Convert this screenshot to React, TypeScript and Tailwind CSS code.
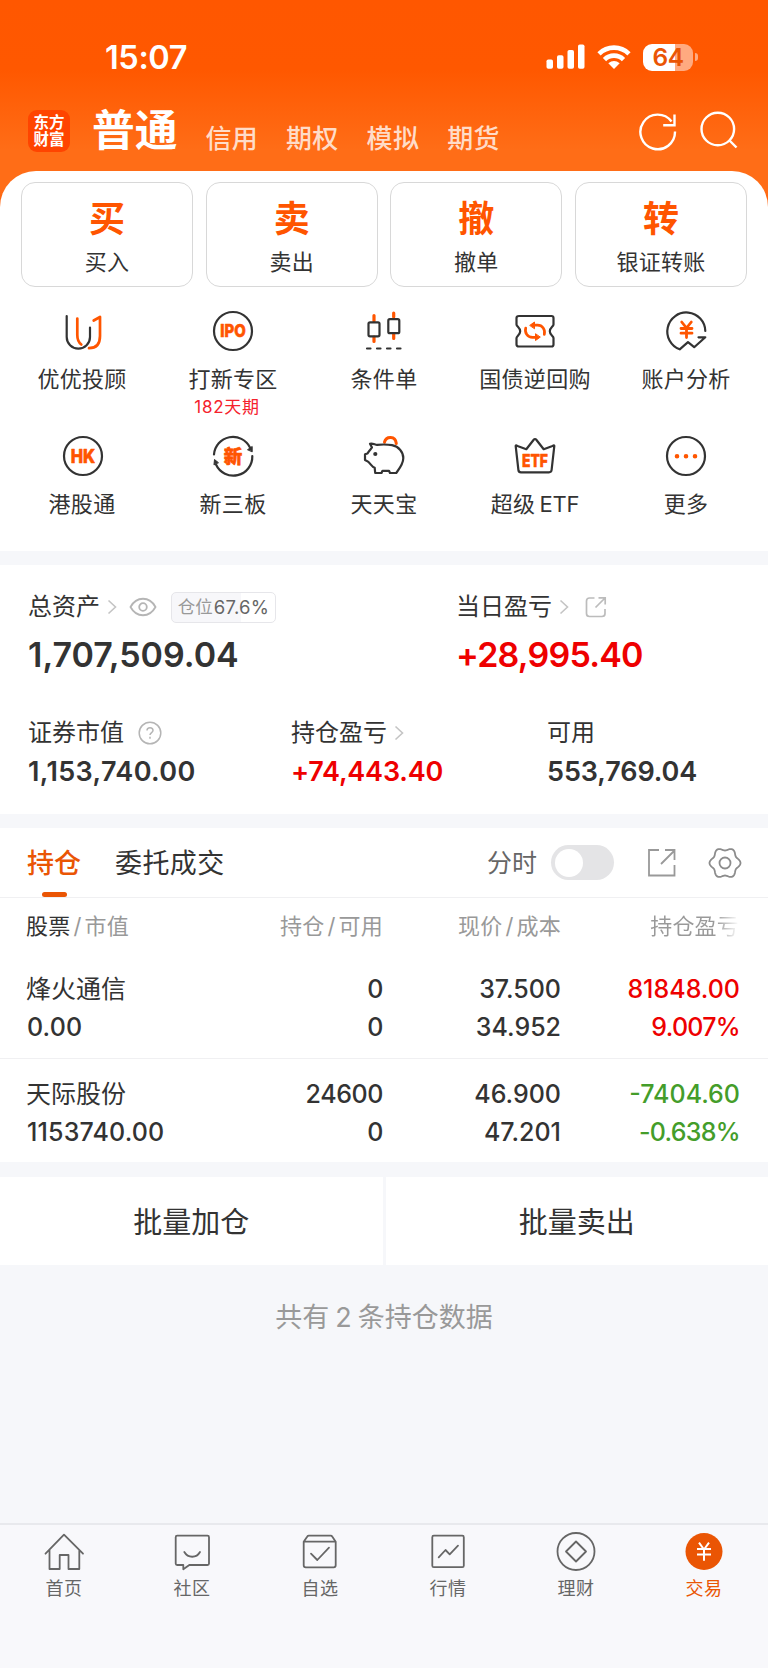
import React from 'react';

interface IconProps {
  children: React.ReactNode;
  size?: number;
  className?: string;
}

// Every glyph is drawn around its own centre point
const Glyph: React.FC<IconProps> = ({ children, size = 44, className = '' }) => (
  <svg
    width={size}
    height={size}
    viewBox={`${-size / 2} ${-size / 2} ${size} ${size}`}
    fill="none"
    strokeLinecap="round"
    strokeLinejoin="round"
    className={`shrink-0 ${className}`}
  >
    {children}
  </svg>
);

const DARK = '#333333';
const ORANGE = '#ff5500';

const glyphText = {
  fill: ORANGE,
  stroke: ORANGE,
  strokeWidth: 0.6,
  textAnchor: 'middle' as const,
  fontFamily: 'Inter, "Noto Sans CJK SC", sans-serif',
  fontWeight: 800,
};

const AdvisorIcon = () => (
  <Glyph>
    <path d="M-15.3 -15V6a11.6 11.6 0 0 0 23.3 0V-3.5" stroke={DARK} strokeWidth="2.2" />
    <path d="M-4.7 -12.5V4q0 6.5 4 9.5" stroke={ORANGE} strokeWidth="2.7" />
    <path d="M11.7 -10.5L18 -14V5C18 13 14 17.2 7 17.2" stroke={ORANGE} strokeWidth="2.7" />
  </Glyph>
);

const IpoIcon = () => (
  <Glyph>
    <circle r="19" stroke={DARK} strokeWidth="2.2" />
    <text {...glyphText} y="6.3" fontSize="17.5" textLength="25.5" lengthAdjust="spacingAndGlyphs">IPO</text>
  </Glyph>
);

const CandleIcon = () => (
  <Glyph>
    <path d="M-10 -15.5V-10M-10 6V10.5M9.7 -18V-14M9.7 3V7.5" stroke={ORANGE} strokeWidth="3.2" />
    <rect x="-15.5" y="-8.7" width="11" height="14" rx="1.5" stroke={DARK} strokeWidth="2.2" />
    <rect x="4.3" y="-11.8" width="11" height="14" rx="1.5" stroke={DARK} strokeWidth="2.2" />
    <path d="M-17 17.5h3.5M-7 17.5h3.5M3 17.5h3.5M13 17.5h3.5" stroke={DARK} strokeWidth="2.2" />
  </Glyph>
);

const BondIcon = () => (
  <Glyph>
    <path
      d="M-16 -15H16.5Q18.500 -15 18.5 -13V-6.5C18.5 -4.5 14.8 -3.5 14.8 0.3S18.5 5 18.5 7V13.5Q18.5 15.5 16.5 15.5H-16Q-18.5 15.5 -18.5 13.5V7C-18.5 5 -14.8 4 -14.8 0.3S-18.5 -4.5 -18.5 -6.5V-13Q-18.5 -15 -16 -15Z"
      stroke={DARK}
      strokeWidth="2.2"
    />
    <path d="M-2 -5.8H2.5C7.5 -5.8 10.5 -1.5 9.3 3.5M2 6.3H-2.5C-7.5 6.3 -10.5 2 -9.3 -3" stroke={ORANGE} strokeWidth="2.7" />
    <path d="M-5 -5.8L-0.5 -9V-2.6ZM5 6.3L0.5 9.5V3.1Z" fill={ORANGE} stroke={ORANGE} strokeWidth="1" />
  </Glyph>
);

const AnalysisIcon = () => (
  <Glyph>
    <path d="M19.3 0A19 19 0 1 0 -6.3 18.3L2 11.2L8.2 16.2L19.3 6.3H12.5" stroke={DARK} strokeWidth="2.2" />
    <path d="M-4.3 -9L0.5 -3L5.3 -9M0.5 -3V6.5M-5 -2.5H6M-5 2.2H6" stroke={ORANGE} strokeWidth="2.8" />
  </Glyph>
);

const HkIcon = () => (
  <Glyph className="ml-[1px]">
    <circle r="19" stroke={DARK} strokeWidth="2.2" />
    <text {...glyphText} y="7" fontSize="18.5" textLength="24.5" lengthAdjust="spacingAndGlyphs">HK</text>
  </Glyph>
);

const NeeqIcon = () => (
  <Glyph>
    <path d="M-19 -1.5A19 19 0 0 1 17 -8.5M19.3 0A19 19 0 0 1 -17 8.5" stroke={DARK} strokeWidth="2.2" />
    <path d="M14.800 -6.5L19.2 -9.5L19.2 -4.5ZM-14.8 6.5L-18.5 3.5L-19 8.5Z" fill={DARK} stroke={DARK} strokeWidth="1" />
    <text {...glyphText} y="6.7" fontSize="18.5">新</text>
  </Glyph>
);

const PiggyIcon = () => (
  <Glyph>
    <path d="M0.5 -13.8C2 -20 11.5 -20.5 12.3 -12.5" stroke={ORANGE} strokeWidth="3" />
    <path
      d="M-14 -12.3C-11 -13 -9 -11.2 -7 -11.2C-3 -11.5 3 -11.8 8 -10.8C15 -9.3 19.3 -4 19.3 2C19.3 8 15.5 12.5 12.2 17H6L5 14.8H-1.5L-2.5 17H-8.8L-9.3 11.8C-12 11 -14 7 -16 5.6L-19 4V-1.7L-16.5 -2.5C-15 -5.5 -13 -7 -12 -8.5Z"
      stroke={DARK}
      strokeWidth="2.2"
    />
    <circle cx="-8.7" cy="-2" r="2.1" fill={DARK} />
  </Glyph>
);

const EtfIcon = () => (
  <Glyph>
    <path
      d="M-19.3 -9.8C-19.5 -11 -18.5 -10.5 -17.5 -10L-8.7 -6.8L-1.5 -16Q0 -18 1.5 -16L8.7 -6.8L17.5 -10C18.5 -10.5 19.5 -11 19.3 -9.8L16.6 14Q16.3 16.3 14 16.3H-14Q-16.3 16.3 -16.6 14Z"
      stroke={DARK}
      strokeWidth="2.2"
    />
    <text {...glyphText} y="10.5" fontSize="17.5" textLength="26" lengthAdjust="spacingAndGlyphs">ETF</text>
  </Glyph>
);

const MoreIcon = () => (
  <Glyph>
    <circle r="19" stroke={DARK} strokeWidth="2.2" />
    <path d="M-9 0.3h0.01M0 0.3h0.01M9 0.3h0.01" stroke={ORANGE} strokeWidth="4.6" />
  </Glyph>
);

const Chevron = ({ className = '' }: { className?: string }) => (
  <svg width="10" height="16" viewBox="0 0 10 16" fill="none" stroke="#c4c4c4" strokeWidth="1.6" className={`shrink-0 ${className}`}>
    <path d="M1.5 1.5L8.5 8L1.5 14.5" />
  </svg>
);

// Six soft lobes around the hub
const gearPoints = Array.from({ length: 96 }, (_, i) => {
  const a = (i / 96) * Math.PI * 2;
  const r = 14 + 1.5 * Math.cos(6 * a);
  return `${(r * Math.cos(a)).toFixed(2)},${(r * Math.sin(a)).toFixed(2)}`;
}).join(' ');

const actions = [
  { mark: '买', label: '买入' },
  { mark: '卖', label: '卖出' },
  { mark: '撤', label: '撤单' },
  { mark: '转', label: '银证转账' },
];

const shortcuts = [
  [
    { icon: AdvisorIcon, label: '优优投顾' },
    { icon: IpoIcon, label: '打新专区', note: '182天期' },
    { icon: CandleIcon, label: '条件单' },
    { icon: BondIcon, label: '国债逆回购' },
    { icon: AnalysisIcon, label: '账户分析' },
  ],
  [
    { icon: HkIcon, label: '港股通' },
    { icon: NeeqIcon, label: '新三板' },
    { icon: PiggyIcon, label: '天天宝' },
    { icon: EtfIcon, label: '超级', suffix: 'ETF' },
    { icon: MoreIcon, label: '更多' },
  ],
];

const holdings = [
  { name: '烽火通信', value: '0.00', amount: '0', available: '0', price: '37.500', cost: '34.952', profit: '81848.00', rate: '9.007%', up: true },
  { name: '天际股份', value: '1153740.00', amount: '24600', available: '0', price: '46.900', cost: '47.201', profit: '-7404.60', rate: '-0.638%', up: false },
];

const navItems = [
  {
    label: '首页',
    art: <path d="M-18.5 2.7L0 -16.3L19 2.7M-14.5 -1V18H-4.3V4H4.5V18H15.3V-1" />,
  },
  {
    label: '社区',
    art: (
      <path d="M-14.8 -15.3H15.5Q17 -15.3 17 -13.8V12.5Q17 14 15.5 14H-2.7L-8.7 18.3V14H-14.8Q-16.3 14 -16.3 12.5V-13.8Q-16.3 -15.3 -14.8 -15.3ZM-7.7 1C-4 7.3 4.5 7.3 8 1" />
    ),
  },
  {
    label: '自选',
    art: (
      <path d="M-16.3 -9.3L-12.7 -14.5Q-12.2 -15.3 -11.2 -15.3H10.7Q11.7 -15.3 12.2 -14.5L15.7 -9.3V14.3Q15.7 16.3 13.7 16.3H-14.3Q-16.3 16.3 -16.3 14.3ZM-16.3 -9.3H15.7M-9 2.7L-2.7 9L9 -3.3" />
    ),
  },
  {
    label: '行情',
    art: (
      <>
        <rect x="-15.7" y="-15.3" width="31.5" height="31.5" rx="1.5" />
        <path d="M-9.3 6.3L-2.5 -1L1.7 3.3L10 -5.3" />
      </>
    ),
  },
  {
    label: '理财',
    art: (
      <>
        <circle cy="0.5" r="18.5" />
        <path d="M0 -9.5L10 0.5L0 10.5L-10 0.5Z" />
      </>
    ),
  },
  {
    label: '交易',
    active: true,
    art: (
      <>
        <circle cy="0.5" r="18.5" fill="#ea5504" stroke="none" />
        <path d="M-5 -8.3L0 -1.5L5 -8.3M0 -1.5V9.7M-7 -2H7M-7 3.5H7" stroke="#ffffff" strokeWidth="2" strokeLinecap="butt" />
      </>
    ),
  },
];

const StatusBar = () => (
  <div className="flex h-[114px] items-center pl-[105px] pr-[70px] text-white">
    <span className="pt-0.5 text-[32.5px] font-semibold leading-none tracking-[-0.4px]">15:07</span>
    <div className="ml-auto flex items-center">
      <svg width="39" height="26" viewBox="0 0 39 26" fill="#ffffff">
        <rect x="0.5" y="15.5" width="6.5" height="9.2" rx="1.8" />
        <rect x="11" y="11.3" width="6.5" height="13.4" rx="1.8" />
        <rect x="21.5" y="6" width="6.5" height="18.7" rx="1.8" />
        <rect x="32" y="0.5" width="6.5" height="24.2" rx="1.8" />
      </svg>
      <svg width="34" height="26" viewBox="0 0 34 26" fill="none" stroke="#ffffff" strokeWidth="4.6" className="ml-3">
        <path d="M2 9.8A21.3 21.3 0 0 1 32 9.8" />
        <path d="M7.5 15.6A13.4 13.4 0 0 1 26.5 15.6" />
        <path d="M17 25L11.3 19.3Q17 14.5 22.7 19.3Z" fill="#ffffff" stroke="none" />
      </svg>
      <div className="ml-3 flex h-[27px] w-[50px] items-center justify-center rounded-[9px] bg-[linear-gradient(90deg,#ffffff_0_63%,#ffaa80_63%)] text-[24.5px] font-semibold leading-none tracking-[-0.5px] text-[#ea5504]">
        64
      </div>
      <span className="ml-0.5 h-2 w-[3px] rounded-r-full bg-[#ffaa80]" />
    </div>
  </div>
);

const AccountTabs = () => (
  <div className="flex h-[57px] pl-7 pr-[29px] text-white">
    <div className="mt-[-4px] flex h-[42px] w-[42px] flex-col items-center justify-center rounded-[9px] bg-[#ff4400] text-[15.5px] font-bold leading-[17px]">
      <span>东方</span>
      <span>财富</span>
    </div>
    <h1 className="ml-[22px] mt-[-5px] text-[42.7px] font-bold leading-[43px]">普通</h1>
    <div className="ml-[28px] mt-[11px] flex gap-[28px] text-[26px] font-medium leading-[27px] tracking-[0.3px] text-[#ffdcc8]">
      {['信用', '期权', '模拟', '期货'].map(tab => (
        <span key={tab}>{tab}</span>
      ))}
    </div>
    <div className="ml-auto mt-[-5px] flex gap-[21px]">
      <svg width="40" height="44" viewBox="0 0 40 44" fill="none" stroke="#ffffff" strokeWidth="2.4">
        <path d="M37 22.5A17.3 17.3 0 1 1 33.5 12.5M36.5 5.5V16.2H25.2" />
      </svg>
      <svg width="40" height="44" viewBox="0 0 40 44" fill="none" stroke="#ffffff" strokeWidth="2.4">
        <circle cx="18.8" cy="20" r="16.3" />
        <path d="M30.5 31.5L37.5 38.5" />
      </svg>
    </div>
  </div>
);

const App: React.FC = () => {
  return (
    <div className="flex h-[1669px] w-[768px] flex-col overflow-hidden bg-white font-['Inter','Noto_Sans_CJK_SC',sans-serif] text-[#333333]">
      <div className="bg-[linear-gradient(180deg,#ff5700_0px,#ff5800_70px,#ff6d17_150px,#ff6d17_190px,#ff5700_215px)]">
        <header>
          <StatusBar />
          <AccountTabs />
        </header>
        <section className="h-[380px] rounded-t-[36px] bg-white">
          <div className="grid grid-cols-4 gap-[12.5px] px-[21px] pt-[11px]">
            {actions.map(action => (
              <button key={action.mark} className="flex h-[105px] flex-col items-center rounded-[14px] border border-[#d8d8d8] pt-[18px]">
                <span className="text-[36px] font-bold leading-[36px] text-[#ff5500]">{action.mark}</span>
                <span className="mt-[14px] text-[22px] leading-[22px] tracking-[0.2px]">{action.label}</span>
              </button>
            ))}
          </div>
          <div className="px-[6.5px] pt-[21.5px]">
            {shortcuts.map((row, i) => (
              <div key={i} className="flex h-[125.5px]">
                {row.map(({ icon: Icon, label, suffix, note }: { icon: React.FC; label: string; suffix?: string; note?: string }) => (
                  <div key={label} className="flex flex-1 flex-col items-center">
                    <Icon />
                    <span className="mt-[15px] whitespace-nowrap text-[22px] leading-[22px] tracking-[0.3px]">
                      {label}
                      {suffix && <span className="ml-1 tracking-[-0.2px]">{suffix}</span>}
                    </span>
                    {note && <span className="mr-3 mt-[9px] text-[17px] leading-[17px] tracking-[0.7px] text-[#f5222d]">{note}</span>}
                  </div>
                ))}
              </div>
            ))}
          </div>
        </section>
      </div>

      <div className="h-[14px] bg-[#f6f7fa]" />

      <section className="h-[249px]">
        <div className="flex pl-7 pt-[26px]">
          <div className="w-[428px]">
            <div className="flex h-8 items-center">
              <span className="text-[24px] leading-none">总资产</span>
              <Chevron className="ml-[7px]" />
              <svg width="28" height="20" viewBox="0 0 28 20" fill="none" stroke="#b5b5b5" strokeWidth="1.8" className="ml-[12px]">
                <path d="M1.5 10C7.5 -1 20.5 -1 26.5 10C20.5 21 7.5 21 1.5 10Z" />
                <circle cx="14" cy="10" r="3.8" />
              </svg>
              <span className="ml-[14px] flex h-[31px] w-[105px] items-center justify-center rounded-[5px] border border-[#e6e6ea] bg-[linear-gradient(90deg,#f7f7fa_0_67%,#ffffff_67%)] text-[17.5px] leading-none text-[#666666]">
                <span className="mr-px text-[#999999]">仓位</span>
                <span className="text-[18.5px] tracking-[0.3px]">67.6%</span>
              </span>
            </div>
            <div className="mt-[15px] text-[34px] font-semibold leading-[34px]">1,707,509.04</div>
          </div>
          <div>
            <div className="flex h-8 items-center">
              <span className="text-[24px] leading-none">当日盈亏</span>
              <Chevron className="ml-[7px]" />
              <svg width="22" height="22" viewBox="0 0 22 22" fill="none" stroke="#bcbcbc" strokeWidth="1.7" className="ml-[16px]">
                <path d="M9.5 2H4.5Q1.5 2 1.5 5V17.5Q1.5 20.5 4.5 20.5H17Q20 20.5 20 17.5V13M10.5 11.5L20 2M13.5 1.8H20.2V8.5" />
              </svg>
            </div>
            <div className="mt-[15px] text-[34px] font-semibold leading-[34px] tracking-[-0.8px] text-[#ee0000]">+28,995.40</div>
          </div>
        </div>
        <div className="flex pl-7 pt-[46px]">
          <div className="w-[263px]">
            <div className="flex h-[30px] items-center">
              <span className="text-[24px] leading-none">证券市值</span>
              <svg width="24" height="24" viewBox="0 0 24 24" fill="none" stroke="#b5b5b5" strokeWidth="1.5" className="ml-[14px]">
                <circle cx="12" cy="12" r="10.8" />
                <path d="M9 9.5Q9 6.7 12 6.7T15 9.5C15 11.5 12 11.7 12 14M12 15.8V17.8" />
              </svg>
            </div>
            <div className="mt-[10px] text-[27px] font-semibold leading-[28px] tracking-[0.38px]">1,153,740.00</div>
          </div>
          <div className="w-[256px]">
            <div className="flex h-[30px] items-center">
              <span className="text-[24px] leading-none">持仓盈亏</span>
              <Chevron className="ml-[7px]" />
            </div>
            <div className="mt-[10px] text-[27px] font-semibold leading-[28px] tracking-[-0.2px] text-[#ee0000]">+74,443.40</div>
          </div>
          <div>
            <div className="flex h-[30px] items-center text-[24px] leading-none">可用</div>
            <div className="mt-[10px] text-[27px] font-semibold leading-[28px] tracking-[-0.1px]">553,769.04</div>
          </div>
        </div>
      </section>

      <div className="h-[14px] bg-[#f6f7fa]" />

      <section className="h-[334px]">
        <div className="flex h-[70px] items-center border-b border-[#f0f0f2] pl-[27px] pr-[27px]">
          <div className="relative flex h-full items-center pt-0.5 text-[27px] font-medium leading-none text-[#ea5504]">
            持仓
            <span className="absolute bottom-0 left-[15px] h-[5px] w-[25px] rounded-full bg-[#ea5504]" />
          </div>
          <span className="ml-[34px] pt-0.5 text-[27px] leading-none tracking-[0.4px]">委托成交</span>
          <span className="ml-auto pt-0.5 text-[25px] leading-none text-[#666666]">分时</span>
          <span className="ml-[14px] flex h-[35px] w-[63px] items-center rounded-full bg-[#e4e4e6] p-1">
            <span className="h-7 w-7 rounded-full bg-white" />
          </span>
          <svg width="30" height="30" viewBox="0 0 30 30" fill="none" stroke="#999999" strokeWidth="1.8" className="ml-[33px]">
            <path d="M12 2H2V27.5H27.5V17M14 16L27 3M18 2H27.5V12" />
          </svg>
          <Glyph size={34} className="ml-[31px] mr-[-1px]">
            <polygon points={gearPoints} stroke="#8c8c8c" strokeWidth="1.8" />
            <circle r="5.5" stroke="#8c8c8c" strokeWidth="1.8" />
          </Glyph>
        </div>

        <div className="flex h-14 items-center pl-[26px] pr-[29px] text-[22px] leading-none tracking-[0.2px] text-[#999999]">
          <span className="w-[179px]"><span className="text-[#333333]">股票</span><span className="mx-[3px]">/</span>市值</span>
          <span className="w-[178px] text-right">持仓<span className="mx-[3px]">/</span>可用</span>
          <span className="w-[178px] text-right">现价<span className="mx-[3px]">/</span>成本</span>
          <span className="w-[178px] bg-[linear-gradient(90deg,#999999_87%,#ffffff_100%)] bg-clip-text text-right text-transparent">持仓盈亏</span>
        </div>

        {holdings.map((item, i) => (
          <div
            key={item.name}
            className={`flex pl-[26px] pr-[28px] pt-[16px] text-[25px] font-medium leading-[38px] ${i === 0 ? 'h-[105px] border-b border-[#f0f0f2]' : 'h-[103px]'}`}
          >
            <div className="w-[179px]">
              <div className="font-normal">{item.name}</div>
              <div className="pl-px tracking-[0.15px]">{item.value}</div>
            </div>
            <div className="w-[178px] text-right tracking-[-0.4px]">
              <div>{item.amount}</div>
              <div>{item.available}</div>
            </div>
            <div className="w-[178px] text-right">
              <div>{item.price}</div>
              <div>{item.cost}</div>
            </div>
            <div className={`w-[179px] text-right ${item.up ? 'text-[#ee0000]' : 'text-[#449d2a]'}`}>
              <div>{item.profit}</div>
              <div className="tracking-[-0.7px]">{item.rate}</div>
            </div>
          </div>
        ))}
      </section>

      <div className="h-[15px] bg-[#f6f7fa]" />

      <div className="flex h-[88px] gap-[3px] bg-[#f6f7fa] text-[29px] leading-none">
        <button className="flex-1 bg-white pt-0.5">批量加仓</button>
        <button className="flex-1 bg-white pt-0.5">批量卖出</button>
      </div>

      <div className="h-[258px] bg-[#f6f7fa] pt-[38px] text-center text-[27px] leading-[30px] text-[#999999]">
        共有<span className="mx-1.5">2</span>条持仓数据
      </div>

      <nav className="flex h-[145px] border-t-2 border-[#e8e9ed] bg-[#f8f8fb] pt-[4px]">
        {navItems.map(item => (
          <div key={item.label} className={`flex flex-1 flex-col items-center ${item.active ? 'text-[#ea5504]' : 'text-[#666666]'}`}>
            <Glyph>
              <g stroke="currentColor" strokeWidth="1.8">{item.art}</g>
            </Glyph>
            <span className="mt-[7px] text-[18px] leading-[18px] tracking-[0.5px]">{item.label}</span>
          </div>
        ))}
      </nav>
    </div>
  );
};

export default App;
